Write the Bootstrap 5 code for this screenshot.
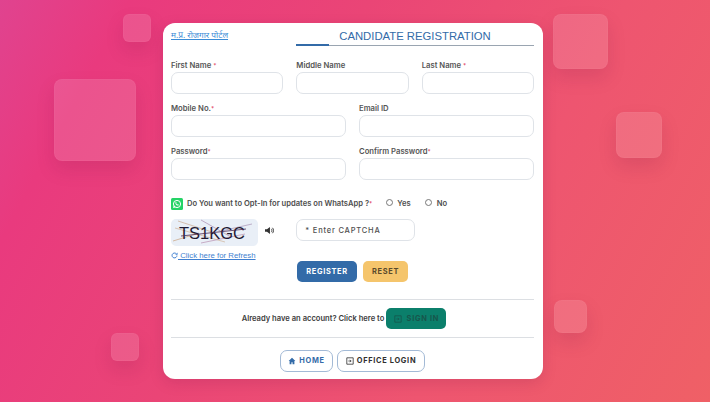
<!DOCTYPE html>
<html lang="en"><head><meta charset="utf-8"><title>Candidate Registration</title>
<link href="https://cdn.jsdelivr.net/npm/bootstrap@5.3.0/dist/css/bootstrap.min.css" rel="stylesheet">
<style>
html,body{height:402px;overflow:hidden}
body{font-family:Inter,"Liberation Sans",Arial,sans-serif;background:linear-gradient(118deg,#e0438f 0,#e93a7e 14%,#ea4576 40%,#ee5570 68%,#ef6066 100%);position:relative;margin:0}
.tile{position:absolute;background:rgba(255,255,255,.13);border:1px solid rgba(255,255,255,.03);border-radius:8px;box-shadow:0 9px 18px rgba(120,20,70,.15)}
.tile-a{left:123px;top:14px;width:28px;height:28px;border-radius:6px}
.tile-b{left:54px;top:79px;width:82px;height:82px}
.tile-c{left:111px;top:333px;width:28px;height:28px;border-radius:6px}
.tile-d{left:553px;top:14px;width:55px;height:55px}
.tile-e{left:616px;top:112px;width:46px;height:46px}
.tile-f{left:554px;top:300px;width:33px;height:33px}
.page-wrap{height:402px;padding-right:4px}
.reg-card{width:380px;height:356px;border:0;border-radius:12px;padding:0 9px 0 8px;box-shadow:0 4px 14px rgba(120,20,70,.18);position:relative;z-index:1}
.top-row{height:24px}
.portal-link{font-family:"Noto Sans","Liberation Serif",serif;font-size:8.3px;color:#3a8bd6;text-decoration:underline;line-height:12px;margin-top:6px}
.title-box{width:238px;margin-left:auto}
.reg-title{font-family:"Liberation Sans",Arial,sans-serif;color:#336ba8;font-size:11.3px;font-weight:400;line-height:15px;text-align:center;margin:6px 0 1px}
.title-line{height:1px;background:#9aa5b1;position:relative}
.title-line::before{content:"";position:absolute;left:0;top:-1px;width:33px;height:2px;background:#336ba8}
.grid-row{--bs-gutter-x:13px;--bs-gutter-y:0}
.field-label{display:block;font-size:7.7px;font-weight:600;color:#555;line-height:10px;margin:1px 0 1px}
.req{color:#e0405a;font-size:6px;line-height:0}
.field{height:22px;min-height:22px;padding:2px 8px;border:1px solid #dfe3e8;border-radius:7px;font-size:7.5px;background:#fff;font-family:inherit}
.field::placeholder{color:#4f4f4f;letter-spacing:.8px;font-weight:500}
.opt-row{height:12px;font-size:7.6px;font-weight:600;color:#4d4d4d}
.wa-icon{width:12px;height:12px;display:block;flex:none}
.opt-radio{width:7px;height:7px;border:1px solid #777;border-radius:50%;display:inline-block;margin-top:-3px}
.captcha-img{width:87px;height:27px;background:#e9eff7;border-radius:5px;display:block;flex:none}
.sound{width:9px;height:9px;display:block}
.refresh{font-family:"Liberation Sans",Arial,sans-serif;font-size:7.8px;color:#3f7fd0;text-decoration:underline;line-height:10px}
.action{font-size:7.4px;font-weight:700;letter-spacing:.7px;height:21px;border-radius:5px;padding:0;display:inline-flex;align-items:center;justify-content:center;border:0}
.act-reg{width:60px;background:#336ba8;color:#fff}
.act-reset{width:45px;background:#f5c56c;color:#5a4a2b}
.rule{height:1px;background:#dcdfe3;opacity:1;border:0;margin:0}
.have-acc{font-size:7.6px;font-weight:600;color:#3d3d3d}
.act-sign{width:60px;background:#0b7f6b;color:#17564c;gap:5px}
.foot-btn{height:22px;border:1px solid #a3bad6;border-radius:7px;background:#fff;font-size:7.4px;font-weight:700;letter-spacing:.7px;display:inline-flex;align-items:center;justify-content:center;gap:3px;padding:0}
.foot-home{width:53px;color:#336ba8}
.foot-office{width:88px;color:#2f2f2f}
.mini{width:8px;height:8px;display:block}
</style></head><body>
<div class="tile tile-a"></div><div class="tile tile-b"></div><div class="tile tile-c"></div><div class="tile tile-d"></div><div class="tile tile-e"></div><div class="tile tile-f"></div>
<div class="page-wrap d-flex align-items-center justify-content-center">
<div class="card reg-card">
 <div class="d-flex top-row">
  <a href="#" class="portal-link">म.प्र. रोजगार पोर्टल</a>
  <div class="title-box"><h1 class="reg-title">CANDIDATE REGISTRATION</h1><div class="title-line"></div></div>
 </div>
 <form>
 <div class="row grid-row" style="margin-top:13px">
  <div class="col-4"><label class="field-label">First Name <span class="req">*</span></label><input class="form-control field"></div>
  <div class="col-4"><label class="field-label">Middle Name</label><input class="form-control field"></div>
  <div class="col-4"><label class="field-label">Last Name <span class="req">*</span></label><input class="form-control field"></div>
 </div>
 <div class="row grid-row" style="margin-top:9px">
  <div class="col-6"><label class="field-label">Mobile No.<span class="req">*</span></label><input class="form-control field"></div>
  <div class="col-6"><label class="field-label">Email ID</label><input class="form-control field"></div>
 </div>
 <div class="row grid-row" style="margin-top:9px">
  <div class="col-6"><label class="field-label">Password<span class="req">*</span></label><input class="form-control field"></div>
  <div class="col-6"><label class="field-label">Confirm Password<span class="req">*</span></label><input class="form-control field"></div>
 </div>
 <div class="d-flex align-items-center opt-row" style="margin-top:18px">
  <svg class="wa-icon me-1" viewBox="0 0 12 12"><rect width="12" height="12" rx="1.500" fill="#25d366"/><circle cx="6" cy="6" r="3.600" fill="none" stroke="#fff" stroke-width="1"/><path d="M2 10l.8-2.600 1.800 1.800z" fill="#fff"/><path d="M4.600 4.200c.3-.4.7-.3.8.2l.1.5-.3.4c.3.6.7 1 1.300 1.300l.4-.3.6.2c.4.2.4.5.1.8-.5.5-1.300.3-2.200-.4-1-.8-1.300-1.900-.8-2.700z" fill="#fff"/></svg>
  <span>Do You want to Opt-In for updates on WhatsApp ?<span class="req">*</span></span>
  <span class="opt-radio" style="margin-left:14px"></span><span style="margin-left:4px">Yes</span>
  <span class="opt-radio" style="margin-left:14px"></span><span style="margin-left:5px">No</span>
 </div>
 <div class="row grid-row" style="margin-top:9px">
  <div class="col-4 d-flex align-items-start">
   <svg class="captcha-img" viewBox="0 0 87 27"><g fill="none" stroke-width=".7"><path d="M7 2l34 11" stroke="#c9a98f"/><path d="M30 1l30 17" stroke="#a98cb0"/><path d="M2 22l26-8" stroke="#c7a07c"/><path d="M4 9l50 14" stroke="#d0b39a"/><path d="M30 24l44-9" stroke="#b78fb0"/><path d="M50 12l31-7" stroke="#a993b4"/></g><text x="8" y="20" font-family="Liberation Sans, sans-serif" font-size="16.500" fill="#1f1a33">TS1KGC</text><path d="M10 17l65-7" stroke="#4a2a50" stroke-width=".8"/></svg>
   <svg class="sound" style="margin:7px 0 0 7px" viewBox="0 0 10 10"><path d="M0 3.500h2.200L5.500 1v8L2.200 6.500H0z" fill="#333"/><path d="M7 3.200c.9 1 .9 2.600 0 3.600M8.300 2c1.600 1.700 1.600 4.300 0 6" fill="none" stroke="#333"/></svg>
  </div>
  <div class="col-4"><input class="form-control field" style="width:119px" placeholder="* Enter CAPTCHA"></div>
 </div>
 <div style="margin-top:1px;line-height:10px"><a href="#" class="refresh"><svg width="7" height="7" viewBox="0 0 8 8" style="vertical-align:-.5px"><path d="M6.800 4a2.800 2.800 0 1 1-.9-2.100" fill="none" stroke="#3f7fd0" stroke-width="1.100"/><path d="M7.500.5v2.700H4.800z" fill="#3f7fd0"/></svg> Click here for Refresh</a></div>
 <div class="d-flex" style="margin:0 0 0 126px;gap:6px">
  <button type="button" class="btn action act-reg">REGISTER</button><button type="button" class="btn action act-reset">RESET</button>
 </div>
 </form>
 <hr class="rule" style="margin-top:17px">
 <div class="d-flex align-items-center justify-content-center" style="height:37px;padding-right:17px">
  <span class="have-acc">Already have an account? Click here to</span>
  <a href="#" class="btn action act-sign" style="margin-left:2px"><svg class="mini" viewBox="0 0 10 10"><path d="M1 1h8v8H1z" fill="none" stroke="#17564c"/><path d="M3 5h3M5 3.500L6.500 5 5 6.500" fill="none" stroke="#17564c"/></svg>SIGN IN</a>
 </div>
 <hr class="rule">
 <div class="d-flex justify-content-center gap-1" style="margin-top:12px">
  <a href="#" class="btn foot-btn foot-home"><svg class="mini" viewBox="0 0 10 10"><path d="M5 1L.8 5H2v4h2.300V6.500h1.400V9H8V5h1.200z" fill="#336ba8"/></svg>HOME</a>
  <a href="#" class="btn foot-btn foot-office"><svg class="mini" viewBox="0 0 10 10"><path d="M1 1h8v8H1z" fill="none" stroke="#2f2f2f"/><path d="M3 5h3M5 3.500L6.500 5 5 6.500" fill="none" stroke="#2f2f2f"/></svg>OFFICE LOGIN</a>
 </div>
</div>
</div>
<script src="https://cdn.jsdelivr.net/npm/bootstrap@5.3.0/dist/js/bootstrap.bundle.min.js"></script>
</body></html>
